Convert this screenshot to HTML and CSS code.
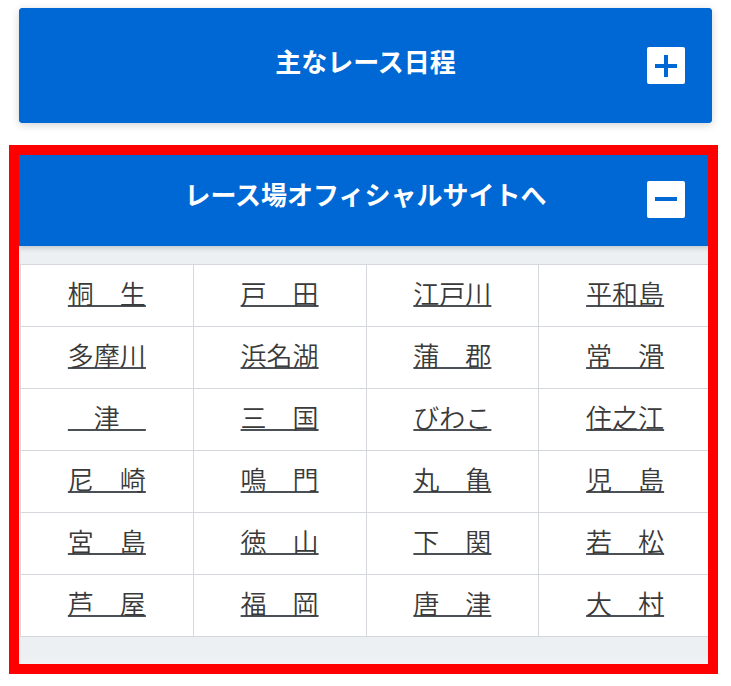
FILE: index.html
```html
<!DOCTYPE html>
<html lang="ja">
<head>
    <meta charset="UTF-8">
    <meta name="viewport" content="width=device-width, initial-scale=1.0">
    <title>レース情報</title>
    <link rel="stylesheet" href="styles.css">
</head>
<body>

    <div class="page">
        <!-- 主なレース日程（閉じた状態） -->
        <section class="acc">
            <div class="acc-head acc-head-tall">
                <span></span>
                <h2 class="acc-title">主なレース日程</h2>
                <span class="acc-btn">
                    <svg width="22" height="22" viewBox="0 0 22 22"><path d="M11 0v22M0 11h22" stroke="#0068d4" stroke-width="4"/></svg>
                </span>
            </div>
        </section>

        <!-- レース場オフィシャルサイト（開いた状態） -->
        <section class="acc acc-open">
            <div class="acc-head">
                <span></span>
                <h2 class="acc-title">レース場オフィシャルサイトへ</h2>
                <span class="acc-btn">
                    <svg width="22" height="22" viewBox="0 0 22 22"><path d="M0 11h22" stroke="#0068d4" stroke-width="4"/></svg>
                </span>
            </div>
            <div class="acc-body">
                <div class="stadiums">
                    <div class="cell"><a href="#">桐　生</a></div>
                    <div class="cell"><a href="#">戸　田</a></div>
                    <div class="cell"><a href="#">江戸川</a></div>
                    <div class="cell"><a href="#">平和島</a></div>
                    <div class="cell"><a href="#">多摩川</a></div>
                    <div class="cell"><a href="#">浜名湖</a></div>
                    <div class="cell"><a href="#">蒲　郡</a></div>
                    <div class="cell"><a href="#">常　滑</a></div>
                    <div class="cell"><a href="#">　津　</a></div>
                    <div class="cell"><a href="#">三　国</a></div>
                    <div class="cell"><a href="#">びわこ</a></div>
                    <div class="cell"><a href="#">住之江</a></div>
                    <div class="cell"><a href="#">尼　崎</a></div>
                    <div class="cell"><a href="#">鳴　門</a></div>
                    <div class="cell"><a href="#">丸　亀</a></div>
                    <div class="cell"><a href="#">児　島</a></div>
                    <div class="cell"><a href="#">宮　島</a></div>
                    <div class="cell"><a href="#">徳　山</a></div>
                    <div class="cell"><a href="#">下　関</a></div>
                    <div class="cell"><a href="#">若　松</a></div>
                    <div class="cell"><a href="#">芦　屋</a></div>
                    <div class="cell"><a href="#">福　岡</a></div>
                    <div class="cell"><a href="#">唐　津</a></div>
                    <div class="cell"><a href="#">大　村</a></div>
                </div>
            </div>
            <div class="highlight"></div>
        </section>
    </div>

</body>
</html>
```

FILE: styles.css
```css
* {
    margin: 0;
    padding: 0;
    box-sizing: border-box;
}
body {
    background: #fff;
    font-family: "Noto Sans CJK JP", "Noto Sans", sans-serif;
}
.page {
    width: 693px;
    margin-left: 19px;
    padding: 8px 0 20px;
}
.acc {
    position: relative;
    background: #0068d4;
    border-radius: 4px;
    box-shadow: 0 2px 8px rgba(0, 0, 0, 0.18);
}
.acc-open {
    margin-top: 29px;
    border-radius: 0;
}
.acc-head {
    display: grid;
    grid-template-columns: 1fr auto 1fr;
    align-items: center;
    height: 94px;
    background: #0068d4;
    color: #fff;
    position: relative;
    z-index: 1;
    box-shadow: 0 2px 5px rgba(0, 0, 0, 0.18);
}
.acc-head-tall {
    height: 115px;
    box-shadow: none;
    border-radius: 4px;
}
.acc-title {
    font-size: 26px;
    font-weight: bold;
    line-height: 1;
    padding-bottom: 10px;
    white-space: nowrap;
}
.acc-btn {
    justify-self: end;
    margin-right: 27px;
    width: 38px;
    height: 37px;
    background: #fff;
    border-radius: 2px;
    display: flex;
    align-items: center;
    justify-content: center;
}
.acc-btn svg {
    display: block;
}
.acc-body {
    background: linear-gradient(#edf0f3, #edf0f3 calc(100% - 9px), #f1f3f5);
    padding: 18px 0 27px 1px;
}
.stadiums {
    display: grid;
    grid-template-columns: repeat(4, 1fr);
    border-top: 1px solid #d4d7db;
    border-left: 1px solid #d4d7db;
}
.cell {
    height: 62px;
    background: #fff;
    border-right: 1px solid #d4d7db;
    border-bottom: 1px solid #d4d7db;
    display: flex;
    align-items: center;
    justify-content: center;
}
.cell a {
    font-size: 26px;
    font-weight: 350;
    line-height: 1;
    color: #3a3a3a;
    text-decoration: underline;
    text-decoration-color: #4b5057;
    text-decoration-thickness: 2px;
    text-underline-offset: 1px;
    white-space: pre;
    padding-bottom: 6px;
}
.highlight {
    position: absolute;
    left: -10px;
    top: -7px;
    right: -6px;
    bottom: -10px;
    border: 10px solid #ff0000;
    pointer-events: none;
    z-index: 2;
}
```
